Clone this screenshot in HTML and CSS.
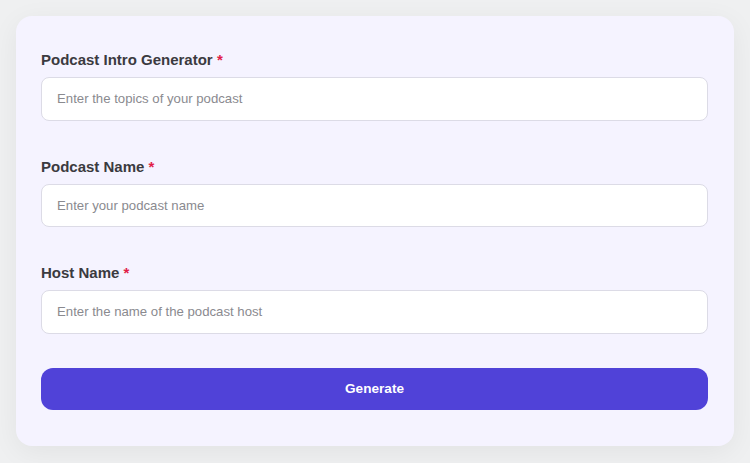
FILE: index.html
```html
<!DOCTYPE html>
<html>
<head>
<meta charset="utf-8">
<link rel="stylesheet" href="styles.css">
</head>
<body>
<div class="page">
  <form class="card">
    <div class="field">
      <label class="label">Podcast Intro Generator <span class="req">*</span></label>
      <input class="input" type="text" placeholder="Enter the topics of your podcast">
    </div>
    <div class="field">
      <label class="label">Podcast Name <span class="req">*</span></label>
      <input class="input" type="text" placeholder="Enter your podcast name">
    </div>
    <div class="field">
      <label class="label">Host Name <span class="req">*</span></label>
      <input class="input" type="text" placeholder="Enter the name of the podcast host">
    </div>
    <button class="btn" type="button">Generate</button>
  </form>
</div>
</body>
</html>
```
FILE: styles.css
```css
html, body {
  margin: 0;
  padding: 0;
}
body {
  background: #eff0f1;
  font-family: "Liberation Sans", Arial, sans-serif;
}
.page {
  padding: 16px 16px;
  height: 463px;
  box-sizing: border-box;
}
.card {
  background: #f5f3ff;
  border-radius: 16px;
  box-shadow: 0 6px 28px rgba(0,0,0,0.06);
  padding: 33px 26px 36px 25px;
  display: flex;
  flex-direction: column;
  gap: 35px;
  box-sizing: border-box;
  margin: 0;
}
.field {
  display: flex;
  flex-direction: column;
  gap: 8px;
}
.label {
  padding-top: 1px;
  font-size: 15px;
  line-height: 19px;
  font-weight: 700;
  color: #3b3a40;
}
.req {
  color: #e11d48;
}
.input {
  height: 43.5px;
  box-sizing: border-box;
  border: 1px solid #dcdbe6;
  border-radius: 8px;
  background: #ffffff;
  padding: 0 15px;
  font-family: "Liberation Sans", Arial, sans-serif;
  font-size: 13.2px;
  color: #333;
  outline: none;
}
.input::placeholder {
  color: #8a8a8f;
}
.btn {
  margin-top: -1px;
  height: 42px;
  border: none;
  border-radius: 12px;
  background: #5042d8;
  color: #ffffff;
  font-family: "Liberation Sans", Arial, sans-serif;
  font-size: 13.6px;
  font-weight: 700;
  cursor: pointer;
}
```
